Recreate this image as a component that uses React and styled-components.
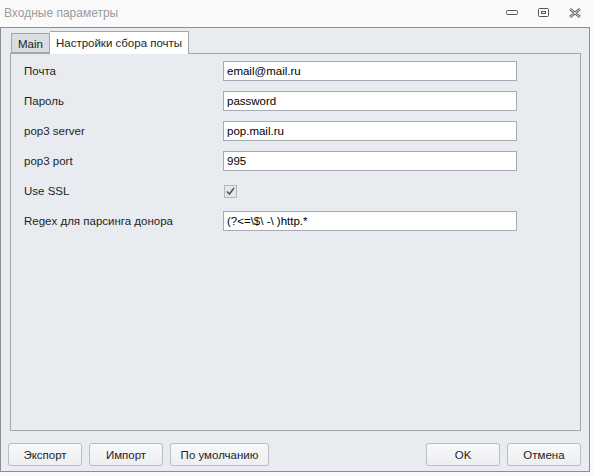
import React from "react";
import styled, { createGlobalStyle } from "styled-components";

const Global = createGlobalStyle`
  html, body { margin: 0; padding: 0; background: #fafafa; overflow: hidden; }
  body { font-family: "Liberation Sans", "DejaVu Sans", sans-serif; font-size: 11px; }
`;

const Window = styled.div`
  width: 594px;
  height: 476px;
  display: flex;
  flex-direction: column;
  background: #fafafa;
  box-sizing: border-box;
`;

const TitleBar = styled.div`
  height: 27px;
  flex: none;
  display: flex;
  align-items: center;
  padding: 0 0 2px 4px;
  box-sizing: border-box;
  color: #9b9b9b;
  font-family: "Liberation Sans", sans-serif;
  font-size: 12px;
`;

const Title = styled.div`
  flex: 1;
`;

const Controls = styled.div`
  display: flex;
  align-items: center;
  gap: 20px;
  padding-right: 13px;
`;

const Frame = styled.div`
  flex: 1;
  margin: 0 4px 4px 0;
  border: 1px solid #8b8e93;
  background: #e8ebf0;
  display: flex;
  flex-direction: column;
  padding: 3px 8px 5px 9px;
  box-sizing: border-box;
`;

const TabStrip = styled.div`
  display: flex;
  align-items: flex-end;
  height: 22px;
  flex: none;
  margin-left: 1px;
  position: relative;
  z-index: 1;
`;

const Tab = styled.div`
  height: ${(p) => (p.$active ? "23px" : "20px")};
  margin-bottom: ${(p) => (p.$active ? "-1px" : "0")};
  padding: 0 ${(p) => (p.$active ? "6px" : "6px")};
  padding-top: ${(p) => (p.$active ? "0" : "2px")};
  display: flex;
  align-items: center;
  box-sizing: border-box;
  border: 1px solid #a3a6ab;
  border-bottom: ${(p) => (p.$active ? "none" : "1px solid #a3a6ab")};
  border-left: ${(p) => (p.$active ? "none" : "1px solid #a3a6ab")};
  background: ${(p) => (p.$active ? "#ffffff" : "#d9dce1")};
  color: #1e1e1e;
  font-size: 11.5px;
`;

const Panel = styled.div`
  flex: 1;
  border: 1px solid #a3a6ab;
  background: #e8ebf0;
  padding: 7px 0 0 13px;
  display: flex;
  flex-direction: column;
  gap: 10px;
`;

const Row = styled.div`
  display: grid;
  grid-template-columns: 199px 294px;
  align-items: center;
  height: 20px;
`;

const Label = styled.div`
  color: #1e1e1e;
  font-size: 11.5px;
`;

const Input = styled.div`
  height: 20px;
  box-sizing: border-box;
  border: 1px solid #a7aab0;
  background: #ffffff;
  padding: 0 3px;
  display: flex;
  align-items: center;
  color: #000;
  font-size: 11.5px;
`;

const Check = styled.div`
  width: 13px;
  height: 13px;
  box-sizing: border-box;
  border: 1px solid #b3b6bb;
  background: #e4e6ea;
  margin-left: 1px;
  display: flex;
  align-items: center;
  justify-content: center;
`;

const Footer = styled.div`
  flex: none;
  display: flex;
  align-items: center;
  height: 23px;
  margin-top: 12px;
  margin-left: -2px;
  gap: 7px;
`;

const Spacer = styled.div`
  flex: 1;
`;

const Button = styled.div`
  width: ${(p) => p.$w || 74}px;
  height: 23px;
  box-sizing: border-box;
  border: 1px solid #b9bcc1;
  border-radius: 3px;
  background: linear-gradient(#f8f9fa, #eceef1);
  display: flex;
  align-items: center;
  justify-content: center;
  color: #1e1e1e;
  font-size: 11.5px;
`;

const fields = [
  { label: "Почта", value: "email@mail.ru" },
  { label: "Пароль", value: "password" },
  { label: "pop3 server", value: "pop.mail.ru" },
  { label: "pop3 port", value: "995" },
  { label: "Use SSL", check: true },
  { label: "Regex для парсинга донора", value: "(?<=\\$\\ -\\ )http.*" },
];

export default function App() {
  return (
    <>
      <Global />
      <Window>
        <TitleBar>
          <Title>Входные параметры</Title>
          <Controls>
            <svg width="12" height="6" viewBox="0 0 12 6">
              <rect x="0.5" y="0.5" width="11" height="4" rx="1" fill="none" stroke="#555" />
            </svg>
            <svg width="11" height="10" viewBox="0 0 11 10">
              <rect x="0.5" y="0.5" width="10" height="8" rx="1" fill="none" stroke="#555" />
              <rect x="3.5" y="3.5" width="4" height="2" fill="none" stroke="#555" />
            </svg>
            <svg width="12" height="10" viewBox="0 0 12 10">
              <path d="M1 1 L11 9 M11 1 L1 9" stroke="#555" strokeWidth="2.6" />
              <path d="M1 1 L11 9 M11 1 L1 9" stroke="#fafafa" strokeWidth="0.9" />
            </svg>
          </Controls>
        </TitleBar>
        <Frame>
          <TabStrip>
            <Tab>Main</Tab>
            <Tab $active>Настройки сбора почты</Tab>
          </TabStrip>
          <Panel>
            {fields.map((f) => (
              <Row key={f.label}>
                <Label>{f.label}</Label>
                {f.check ? (
                  <Check>
                    <svg width="9" height="9" viewBox="0 0 9 9">
                      <path d="M1 4.5 L3.5 7 L8 1" fill="none" stroke="#555" strokeWidth="1.6" />
                    </svg>
                  </Check>
                ) : (
                  <Input>{f.value}</Input>
                )}
              </Row>
            ))}
          </Panel>
          <Footer>
            <Button>Экспорт</Button>
            <Button>Импорт</Button>
            <Button $w={99}>По умолчанию</Button>
            <Spacer />
            <Button>OK</Button>
            <Button>Отмена</Button>
          </Footer>
        </Frame>
      </Window>
    </>
  );
}
